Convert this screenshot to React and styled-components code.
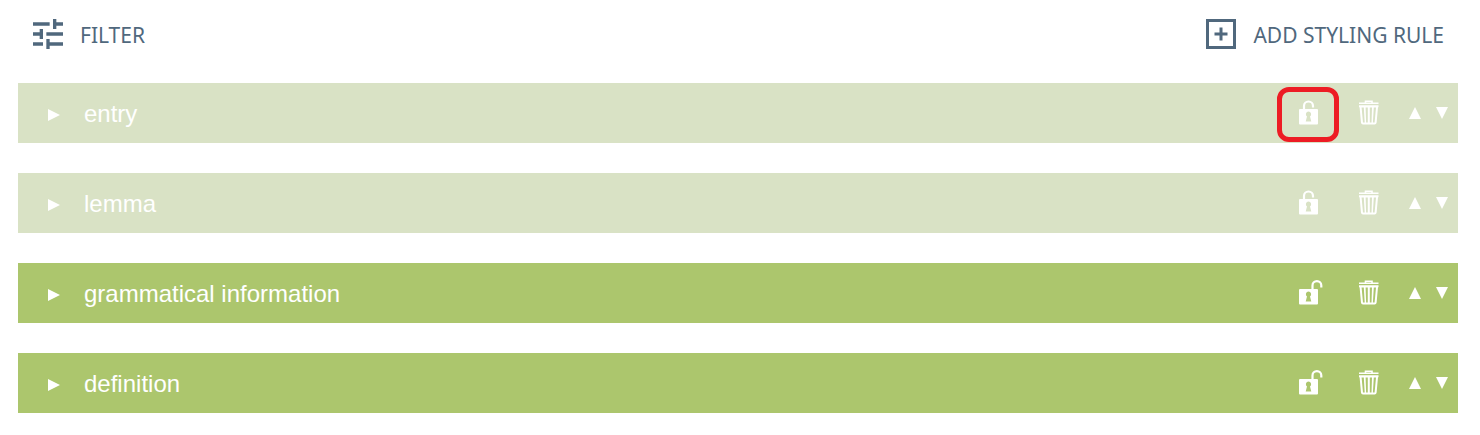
import React from 'react';
import styled, { createGlobalStyle } from 'styled-components';

const GlobalStyle = createGlobalStyle`
  *, *::before, *::after { box-sizing: border-box; }
  body { margin: 0; background: #fff; }
`;

const Page = styled.main`
  padding: 0 22px 22px 18px;
  font-family: "Liberation Sans", Arial, sans-serif;
`;

const Toolbar = styled.header`
  display: flex;
  align-items: center;
  justify-content: space-between;
  padding: 14px 14px 27px 10px;
`;

const ToolButton = styled.button`
  display: flex;
  align-items: flex-start;
  gap: 12px;
  padding: 0;
  border: 0;
  background: none;
  color: #50687d;
  font: 21px/42px "Noto Sans", Tahoma, sans-serif;
  cursor: pointer;
`;

const RuleList = styled.ul`
  display: flex;
  flex-direction: column;
  gap: 30px;
  margin: 0;
  padding: 0;
  list-style: none;
`;

const Rule = styled.li`
  display: flex;
  align-items: center;
  justify-content: space-between;
  height: 60px;
  padding: 3px 3px 0 30px;
  background: ${(p) => (p.$locked ? '#d9e2c5' : '#acc66d')};
  color: #fff;
`;

const RuleToggle = styled.button`
  display: flex;
  align-items: center;
  gap: 24px;
  padding: 0 0 2px;
  border: 0;
  background: none;
  color: inherit;
  font: 24px/31px "Liberation Sans", Arial, sans-serif;
  cursor: pointer;
`;

const Actions = styled.div`
  display: flex;
  align-items: center;
`;

const Reorder = styled.div`
  display: flex;
  margin-left: 4px;
`;

const ActionButton = styled.button`
  display: flex;
  align-items: center;
  justify-content: center;
  width: 58px;
  height: 55px;
  padding: 0;
  border: 0;
  background: none;
  color: inherit;
  cursor: pointer;
`;

const LockButton = styled(ActionButton)`
  width: 62px;
  border: 5px solid ${(p) => (p.$highlighted ? '#ed1c24' : 'transparent')};
  border-radius: 12px;
`;

const MoveButton = styled(ActionButton)`
  width: 27px;
`;

const TuneIcon = () => (
  <svg width="40" height="40" viewBox="0 0 24 24" fill="currentColor" aria-hidden="true">
    <path d="M3 17v2h6v-2H3zM3 5v2h10V5H3zm10 16v-2h8v-2h-8v-2h-2v6h2zM7 9v2H3v2h4v2h2V9H7zm14 4v-2H11v2h10zm-6-4h2V7h4V5h-4V3h-2v6z" />
  </svg>
);

const AddIcon = () => (
  <svg width="40" height="40" viewBox="0 0 40 40" fill="none" stroke="currentColor" strokeWidth="3" aria-hidden="true">
    <path d="M6.500 6.500h27v27h-27zM20 13.500v13M13.500 20h13" />
  </svg>
);

const LockIcon = ({ locked }) => (
  <svg width="30" height="29" viewBox="0 0 30 29" aria-hidden="true">
    <path
      d={locked ? 'M11 9V6a4.500 4.500 0 0 1 9 0V7.500' : 'M19.500 9.500V5.500a4.400 4.400 0 0 1 8.800 0V7.500'}
      fill="none"
      stroke="currentColor"
      strokeWidth="2.200"
    />
    <path
      fill="currentColor"
      fillRule="evenodd"
      d="M7 9h17a1 1 0 0 1 1 1v13.500a1 1 0 0 1-1 1H7a1 1 0 0 1-1-1V10a1 1 0 0 1 1-1zM15.500 11.500a2.700 2.700 0 0 0-1.500 4.900L12.700 21.500h5.600L17 16.400a2.700 2.700 0 0 0-1.500-4.900z"
    />
  </svg>
);

const TrashIcon = () => (
  <svg width="30" height="29" viewBox="0 0 30 29" aria-hidden="true">
    <path d="M6 3.300h19.500M12.500 3V1.200h6.500V3" fill="none" stroke="currentColor" strokeWidth="1.600" />
    <path
      fill="currentColor"
      fillRule="evenodd"
      d="M6 5.300H25.500V7.300H25L23.600 22.800q-.2 1.800-2 1.800H10q-1.800 0-2-1.800L6.600 7.300H6zM8.600 7.500L10 22.500h1.700L10.800 7.500zM12.600 7.500l.5 15h1.700L14.800 7.500zM16.800 7.500l0 15h1.700L19 7.500zM20.800 7.500l-.9 15h1.700L23 7.500z"
    />
  </svg>
);

const ARROWS = {
  right: 'M0 3L12 9L0 15z',
  up: 'M0 12L6 0L12 12z',
  down: 'M0 0H12L6 12z',
};

const Arrow = ({ direction }) => (
  <svg width="12" height="15" viewBox="0 0 12 15" fill="currentColor" aria-hidden="true">
    <path d={ARROWS[direction]} />
  </svg>
);

const RULES = [
  { name: 'entry', locked: true, highlighted: true },
  { name: 'lemma', locked: true },
  { name: 'grammatical information', locked: false },
  { name: 'definition', locked: false },
];

export default function App() {
  return (
    <>
      <GlobalStyle />
      <Page>
        <Toolbar>
          <ToolButton type="button"><TuneIcon />FILTER</ToolButton>
          <ToolButton type="button"><AddIcon />ADD STYLING RULE</ToolButton>
        </Toolbar>
        <RuleList>
          {RULES.map(({ name, locked, highlighted }) => (
            <Rule key={name} $locked={locked}>
              <RuleToggle type="button" aria-expanded="false">
                <Arrow direction="right" />
                {name}
              </RuleToggle>
              <Actions>
                <LockButton type="button" $highlighted={highlighted} aria-label={locked ? `Unlock ${name}` : `Lock ${name}`}>
                  <LockIcon locked={locked} />
                </LockButton>
                <ActionButton type="button" aria-label={`Delete ${name}`}><TrashIcon /></ActionButton>
                <Reorder>
                  <MoveButton type="button" aria-label={`Move ${name} up`}><Arrow direction="up" /></MoveButton>
                  <MoveButton type="button" aria-label={`Move ${name} down`}><Arrow direction="down" /></MoveButton>
                </Reorder>
              </Actions>
            </Rule>
          ))}
        </RuleList>
      </Page>
    </>
  );
}
